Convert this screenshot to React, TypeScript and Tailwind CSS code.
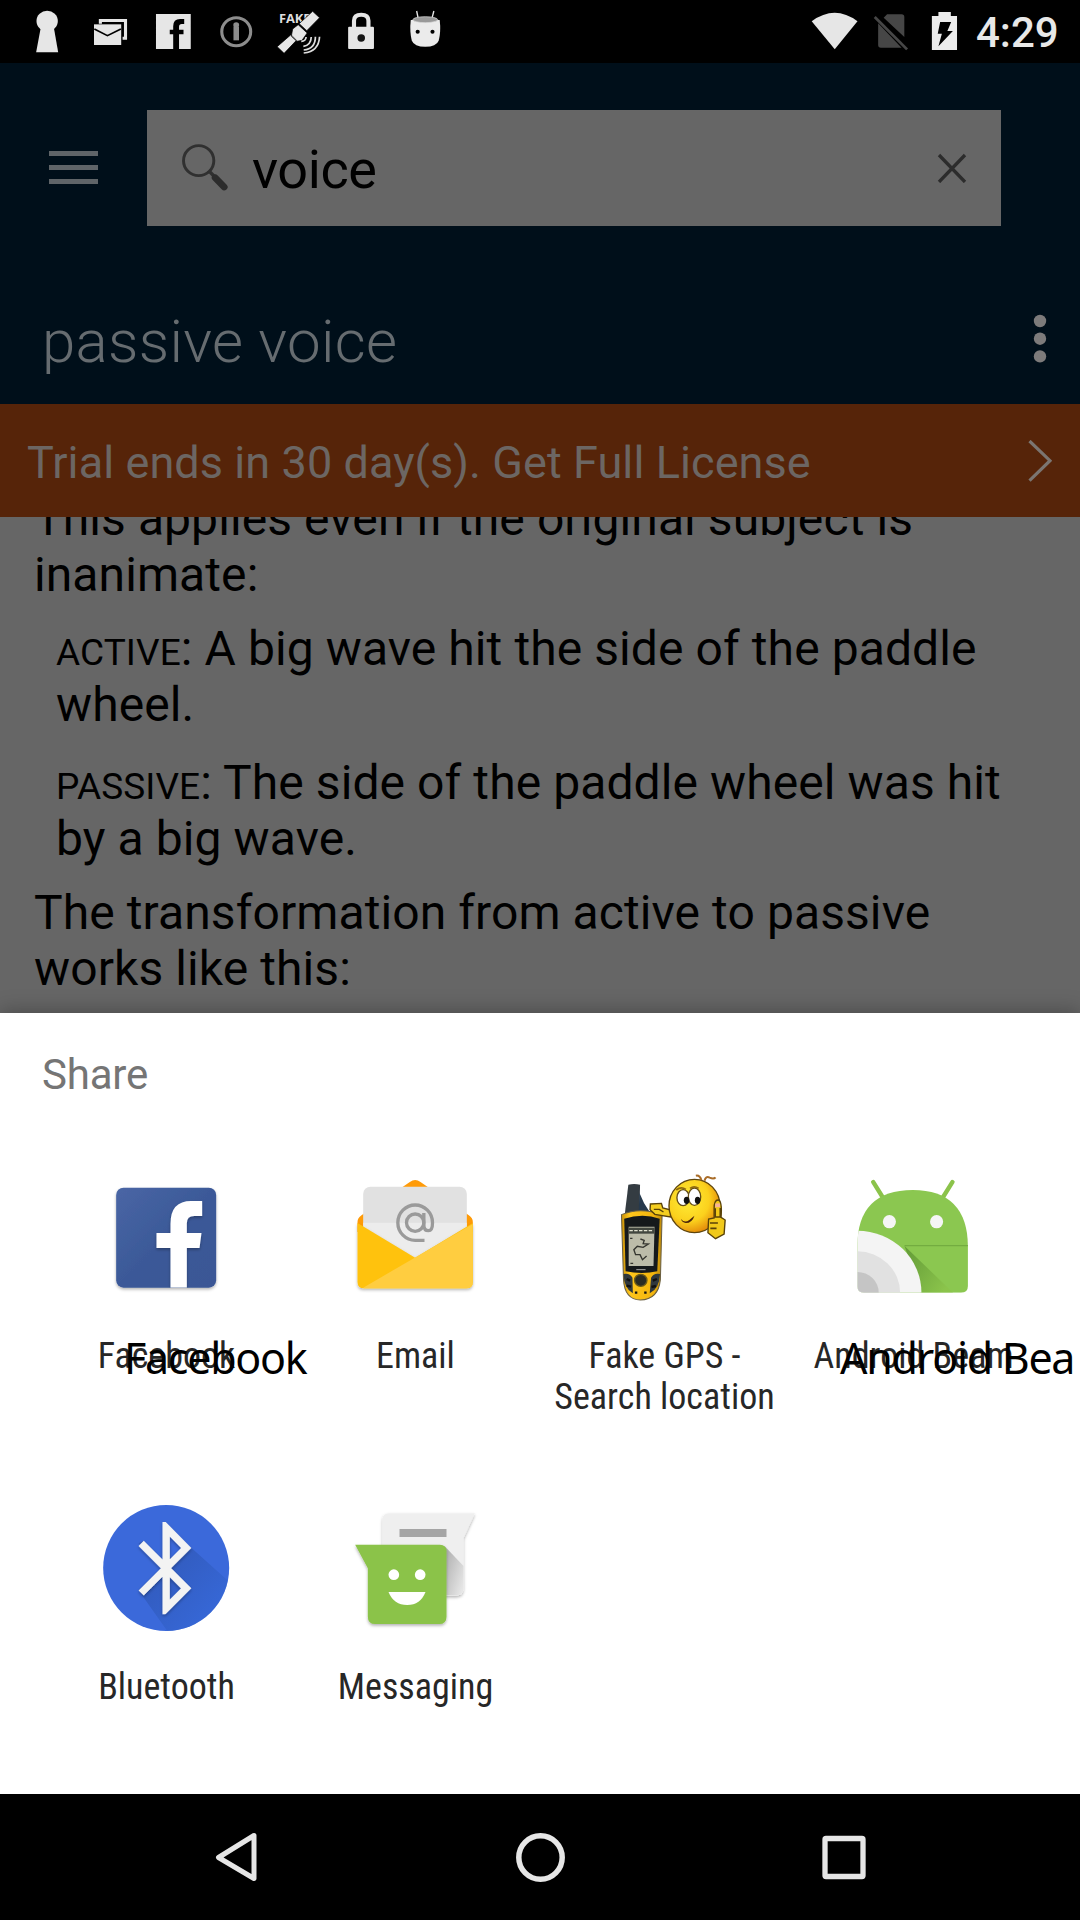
import type { ReactNode } from "react";

function Slot({ box, w, children }: { box: string; w: string; children: ReactNode }) {
  return (
    <svg className={`${w} h-[63px] shrink-0`} viewBox={box} preserveAspectRatio="none">
      {children}
    </svg>
  );
}

function StatusBar() {
  return (
    <header className="flex h-[63px] shrink-0 items-center bg-black pl-4">
      <Slot w="w-[63px]" box="46.5 0 183 189">
        <circle cx="137" cy="63" r="31" fill="#e6e6e6" />
        <path d="M119 80h37l13 77h-64z" fill="#e6e6e6" />
      </Slot>
      <Slot w="w-[63px]" box="229.4 0 183 189">
        <path d="M287 71V57h82v62h-13v-9h4V66h-64v5z" fill="#e6e6e6" />
        <path d="M273 73h79v62h-79z" fill="#e6e6e6" />
        <path d="M274 87l38 20 39-20" fill="none" stroke="#000" strokeWidth="5" />
      </Slot>
      <Slot w="w-[63px]" box="412.4 0 183 189">
        <path d="M453 42h101v105h-34v-44h13v-14h-13V80q0-8 8-8h7V57h-12q-20 0-20 22v10h-10v14h10v44h-50z" fill="#e6e6e6" />
      </Slot>
      <Slot w="w-[63px]" box="595.3 0 183 189">
        <circle cx="686" cy="95" r="42" fill="none" stroke="#8d8d8d" strokeWidth="9" />
        <path d="M678 80h16v41h-16z" fill="#8d8d8d" />
        <circle cx="686" cy="75" r="8.500" fill="#8d8d8d" />
      </Slot>
      <Slot w="w-[63px]" box="778.3 0 183 189">
        <text x="810" y="68" fontSize="38" fontWeight="700" fontFamily="Open Sans, sans-serif" textLength="92" lengthAdjust="spacingAndGlyphs" fill="#dedede">FAKE</text>
        <path d="M908 34l20 19-37 39-22-21zM866 74l26 25-15 22-15 3-16-15 4-22zM845 104l16 17-36 39-20-20z" fill="#e6e6e6" stroke="#000" strokeWidth="2" />
        <path d="M889 111q-1 13-14 13M904 111q-1 25-23 28M916 110q0 36-34 40M928 110q-2 44-46 49" fill="none" stroke="#dedede" strokeWidth="5" />
      </Slot>
      <Slot w="w-[63px]" box="961.2 0 183 189">
        <path d="M1028 82V62q0-18 21-18t21 18v20" fill="none" stroke="#e6e6e6" strokeWidth="12" />
        <rect x="1011" y="80" width="75" height="67" rx="3" fill="#e6e6e6" />
        <circle cx="1049" cy="114" r="11" fill="#151515" />
      </Slot>
      <Slot w="w-[63px]" box="1144.2 0 183 189">
        <path d="M1210 33l4 20M1260 33l-5 20" stroke="#e6e6e6" strokeWidth="4" />
        <path d="M1193 60q-4 35 3 62 7 18 39 18t39-18q7-27 3-62z" fill="#ebebeb" />
        <ellipse cx="1235" cy="59" rx="36" ry="9" fill="#999" stroke="#ddd" strokeWidth="2" />
        <circle cx="1213" cy="95" r="6" fill="#000" />
        <circle cx="1256" cy="95" r="6" fill="#000" />
      </Slot>
      <div className="ml-auto flex items-center">
        <Slot w="w-[58px]" box="769.6 0 168.4 189">
          <path d="M789 64q67-51 133 0l-66 84z" fill="#e6e6e6" />
        </Slot>
        <Slot w="w-[55px]" box="938 0 159.7 189">
          <path d="M998 53l10-10h42q8 0 8 8v60zM982 70l68 73h-60q-8 0-8-8z" fill="#464646" />
          <path d="M972 51l94 97" stroke="#464646" strokeWidth="8" />
        </Slot>
        <Slot w="w-[58px]" box="1097.7 0 168.4 189">
          <path d="M1157 36h36v12h18v102h-73V48h19z" fill="#ececec" />
          <path d="M1162 66h32l-11 27h16l-42 46 10-38h-12z" fill="#000" />
        </Slot>
        <span className="w-[104px] pt-[2px] text-[42px] leading-[63px] font-medium text-[#e8e8e8]">4:29</span>
      </div>
    </header>
  );
}

function SearchHeader() {
  return (
    <div className="h-[341px] shrink-0 bg-[#000f1a] pt-[47px]">
      <div className="flex h-[116px] items-center">
        <div className="ml-[49px] flex w-[98px] flex-col gap-[9px] pb-[1px]">
          <div className="h-[5px] w-[49px] bg-[#5f6468]" />
          <div className="h-[5px] w-[49px] bg-[#5f6468]" />
          <div className="h-[5px] w-[49px] bg-[#5f6468]" />
        </div>
        <div className="flex h-full w-[854px] items-center bg-[#666]">
          <svg className="h-[116px] w-[105px] shrink-0" viewBox="426.9 330 305 348" preserveAspectRatio="none">
            <ellipse cx="577" cy="482" rx="44" ry="45" fill="none" stroke="#303030" strokeWidth="8.500" />
            <path d="M606 512l18 19" stroke="#303030" strokeWidth="10" />
            <path d="M625 533l26 28" stroke="#2c2c2c" strokeWidth="20" strokeLinecap="round" />
          </svg>
          <span className="pt-[3px] text-[54px] leading-[63px] tracking-[-0.4px] text-black">voice</span>
          <svg className="mr-[34px] ml-auto h-[30px] w-[30px]" viewBox="0 0 30 30">
            <path d="M2 2l26 27M28 2L2 29" stroke="#2c2c2c" strokeWidth="3.300" />
          </svg>
        </div>
      </div>
      <div className="flex h-[178px] items-center pt-[2px] pl-[42px]">
        <h1 className="pt-[51px] text-[60px] leading-[70px] font-light tracking-[0.3px] text-[#666c70]">passive voice</h1>
        <svg className="mr-[33px] ml-auto mt-[46px] h-[50px] w-[14px]" viewBox="0 0 14 50">
          <circle cx="7" cy="7" r="6.2" fill="#7d7b7b" />
          <circle cx="7" cy="24.7" r="6.2" fill="#7d7b7b" />
          <circle cx="7" cy="42.4" r="6.2" fill="#7d7b7b" />
        </svg>
      </div>
    </div>
  );
}

function TrialBanner() {
  return (
    <div className="flex h-[113px] shrink-0 items-center bg-[#562409] pr-7 pl-[27px] text-[#6c6663]">
      <span className="pt-[4px] text-[45px] leading-[53px] tracking-[0.08px] whitespace-nowrap">Trial ends in 30 day(s). Get Full License</span>
      <svg className="ml-auto h-[42px] w-6" viewBox="0 0 24 42">
        <path d="M1.5 1l20.500 19.700L1.500 40.700" fill="none" stroke="#7b7571" strokeWidth="3.200" />
      </svg>
    </div>
  );
}

function Article() {
  return (
    <main className="h-[496px] shrink-0 overflow-hidden bg-[#666] text-[48px] leading-[56.25px] tracking-[0.09px] whitespace-nowrap text-black">
      <p className="-mt-[26px] pl-[34px]">This applies even if the original subject is<br />inanimate:</p>
      <p className="mt-[17px] pl-14"><span className="text-[37px] leading-none">ACTIVE</span>: A big wave hit the side of the paddle<br />wheel.</p>
      <p className="mt-[22px] pl-14"><span className="text-[37px] leading-none">PASSIVE</span>: The side of the paddle wheel was hit<br />by a big wave.</p>
      <p className="mt-[17px] pl-[34px]">The transformation from active to passive<br />works like this:</p>
    </main>
  );
}

const FacebookIcon = (
  <svg className="size-36" viewBox="103.5 75 432 432">
    <defs>
      <linearGradient id="fb" x1="0" y1="0" x2="1" y2="1"><stop offset="0" stopColor="#4a66a5" /><stop offset=".5" stopColor="#3b5998" /><stop offset="1" stopColor="#3a5795" /></linearGradient>
      <filter id="sh" x="-20%" y="-20%" width="140%" height="150%"><feDropShadow dx="0" dy="5" stdDeviation="4" floodOpacity=".3" /></filter>
      <clipPath id="fbc"><rect x="170" y="143" width="300" height="300" rx="22" /></clipPath>
    </defs>
    <rect x="170" y="143" width="300" height="300" rx="22" fill="url(#fb)" filter="url(#sh)" />
    <path clipPath="url(#fbc)" filter="url(#sh)" d="M333 443V324h-42v-45h42v-28q0-68 62-68h33v45h-24q-22 0-22 22v29h44l-6 45h-38v119z" fill="#fff" />
  </svg>
);

const EmailIcon = (
  <svg className="size-36" viewBox="850.5 75 432 432">
    <path d="M894 246q0-12 12-20l145-100q16-12 32 0l145 100q12 8 12 20v30H894z" fill="#ff9b08" />
    <rect x="911" y="140" width="311" height="250" rx="22" fill="#e1e1e1" />
    <path d="M911 248h311v60l-155 70-156-70z" fill="#ececec" />
    <path d="M894 249l173 104 173-104v176q0 20-20 20H914q-20 0-20-20z" fill="#ffc20e" filter="url(#sh)" />
    <path d="M911 443L1240 252v173q0 20-20 20H914z" fill="#ffcd40" />
    <circle cx="1067" cy="248" r="26" fill="none" stroke="#9a9a9a" strokeWidth="10" />
    <path d="M1093 219v35q0 18 14 18 12 0 12-24a52 53 0 1 0-52 53h28" fill="none" stroke="#9a9a9a" strokeWidth="10" />
  </svg>
);

const GpsIcon = (
  <svg className="size-36" viewBox="152.500 75 418 432" preserveAspectRatio="none">
    <defs>
      <radialGradient id="face" cx=".38" cy=".38" r=".68"><stop offset="0" stopColor="#ffed38" /><stop offset=".6" stopColor="#fbd11d" /><stop offset="1" stopColor="#e18208" /></radialGradient>
      <linearGradient id="gps"><stop offset="0" stopColor="#c89008" /><stop offset=".2" stopColor="#ffc61c" /><stop offset=".8" stopColor="#f2b40c" /><stop offset="1" stopColor="#ba8709" /></linearGradient>
    </defs>
    <path d="M258 134q17-4 34 0l-2 86h-42z" fill="#343c42" />
    <path d="M290 158q12 32 28 55l-30 10z" fill="#26394d" />
    <path d="M238 224q54-24 118 0l-5 195q-6 60-58 61-46-2-49-61z" fill="url(#gps)" stroke="#6b6042" strokeWidth="3" />
    <path d="M246 236q54-18 103 0l-7 158q-44 10-92 0z" fill="#15191b" />
    <path d="M259 260h75l-3 118h-72z" fill="#bcbca9" />
    <path d="M259 263h75v18h-75z" fill="#42473f" />
    <path d="M261 272h67" stroke="#e2e2d0" strokeWidth="4" strokeDasharray="10 4" />
    <path d="M293 297l11 4-3 10 15 1-15 10-17-3-10 10 5 15 13 0 7 15 12-11M263 295h7M264 370h8" fill="none" stroke="#34352f" strokeWidth="4" />
    <path d="M244 402q18-4 26 11l1 47q-25-13-27-58zM350 402q-18-4-26 11l-4 47q28-13 30-58z" fill="#30383d" />
    <circle cx="294" cy="421" r="18" fill="#292b24" stroke="#6b5a18" strokeWidth="4" />
    <path d="M253 417l10 5M253 437l13 3M341 417l-12 5M338 438l-13 3M277 458h7M304 458h7" stroke="#111" strokeWidth="7" />
    <path d="M281 389h27" stroke="#aaa" strokeWidth="3" />
    <path d="M322 192l32-2 4 14 24 6-2 21-45-8-14-14z" fill="#f4ce20" stroke="#594209" strokeWidth="4" />
    <path d="M332 208h16l12 8" fill="none" stroke="#594209" strokeWidth="4" />
    <ellipse cx="450" cy="198" rx="74" ry="80" fill="url(#face)" stroke="#5e450d" strokeWidth="4" />
    <path d="M470 121q-4-16-16-14M479 122q4-15 15-9 12 6 17-1" fill="none" stroke="#a96c28" strokeWidth="6" />
    <ellipse cx="417" cy="173" rx="18" ry="24" fill="#fff" stroke="#675019" strokeWidth="4" />
    <ellipse cx="450" cy="170" rx="18" ry="26" fill="#fff" stroke="#675019" strokeWidth="4" />
    <ellipse cx="427" cy="181" rx="8" ry="11" fill="#111" />
    <ellipse cx="459" cy="181" rx="8" ry="11" fill="#111" />
    <path d="M397 150q14-12 28-2M437 145q12-9 25 0" fill="none" stroke="#8f6a10" strokeWidth="5" />
    <path d="M411 237q10 14 24 3l15-13q-7 22-25 22-12-1-14-12z" fill="#4a230b" />
    <path d="M507 205q0-26 12-25 12 3 8 52l12 8-3 42-25 14-22-18 2-41 16-3z" fill="#f1c91a" stroke="#594209" strokeWidth="4" />
    <path d="M495 249h23M496 265h18M510 205v26h15v-27" fill="none" stroke="#594209" strokeWidth="5" />
    <path d="M510 196h14" stroke="#f7b29a" strokeWidth="11" />
  </svg>
);

const BeamIcon = (
  <svg className="size-36" viewBox="875.500 75 418 432" preserveAspectRatio="none">
    <defs>
      <clipPath id="bm"><path d="M923 318q0-167 161-168 158 1 160 168v120q0 20-20 20H943q-20 0-20-20z" /></clipPath>
      <linearGradient id="bs" x1="0" y1="0" x2="1" y2=".7"><stop offset="0" stopColor="#558b2f" /><stop offset="1" stopColor="#8bc34a" /></linearGradient>
    </defs>
    <path d="M969 126l30 50M1199 126l-30 50" stroke="#8bc34a" strokeWidth="13" strokeLinecap="round" />
    <g clipPath="url(#bm)">
      <path d="M920 145h330v320H920z" fill="#8bc750" />
      <path d="M1060 317h190" stroke="#73ac40" strokeWidth="4" />
      <path d="M1060 318l141 140h-95z" fill="url(#bs)" opacity=".75" />
      <circle cx="923" cy="458" r="186" fill="#f4f4f4" />
      <circle cx="923" cy="458" r="124" fill="#e1e1e1" />
      <circle cx="923" cy="458" r="62" fill="#c5c5c5" />
      <ellipse cx="1016" cy="245" rx="19" ry="20" fill="#f5f5f5" />
      <ellipse cx="1153" cy="245" rx="19" ry="20" fill="#f5f5f5" />
    </g>
  </svg>
);

const BluetoothIcon = (
  <svg className="size-36" viewBox="103.5 48 432 432">
    <defs>
      <clipPath id="btc"><circle cx="320" cy="264" r="189" /></clipPath>
      <clipPath id="btr"><path d="M200 126h240v277H200z" /></clipPath>
      <linearGradient id="bts" x1="0" y1="0" x2="1" y2="1"><stop offset=".2" stopColor="#2a4fa5" /><stop offset=".75" stopColor="#3367d6" /></linearGradient>
    </defs>
    <circle cx="320" cy="264" r="189" fill="#3b69da" />
    <path clipPath="url(#btc)" d="M396 204l140 125-120 170h-60l-119-168 70-69-70-72 15-8 60 60z" fill="url(#bts)" opacity=".55" />
    <g filter="url(#sh)">
      <path clipPath="url(#btr)" d="M245 190l135 135-60 60V143l60 61-135 135" fill="none" stroke="#f3f3f3" strokeWidth="22" />
    </g>
  </svg>
);

const MessagingIcon = (
  <svg className="size-36" viewBox="850.5 48 432 432">
    <defs><linearGradient id="ms" x1="0" y1="0" x2="1" y2=".8"><stop offset="0" stopColor="#aaa" /><stop offset="1" stopColor="#e6e6e6" /></linearGradient></defs>
    <path d="M969 120q0-20 20-20h257l-34 75v150q0 22-22 22H969z" fill="#efefef" filter="url(#sh)" />
    <path d="M1155 198l57 60v66q0 22-22 22h-30z" fill="url(#ms)" />
    <path d="M1020 147h141v24h-141z" fill="#a5a5a5" />
    <path d="M887 194h254q20 0 20 20v196q0 22-22 22H947q-22 0-22-22V265z" fill="#8bc34a" filter="url(#sh)" />
    <circle cx="1003" cy="284" r="16" fill="#fff" />
    <circle cx="1082" cy="284" r="16" fill="#fff" />
    <path d="M987 336h111q-15 39-55 39t-56-39z" fill="#fff" />
  </svg>
);

function ShareTarget({ icon, lines, overlay, overlayLeft = "" }: { icon: ReactNode; lines: string[]; overlay?: string; overlayLeft?: string }) {
  return (
    <div className="relative flex h-[331px] w-[249px] flex-col items-center">
      <div className="mr-px">{icon}</div>
      <div className="mt-[27px] flex flex-col items-center font-['Roboto_Condensed','Roboto'] text-[36px] leading-[41px] whitespace-nowrap text-[#272727]">
        {lines.map((line) => <span key={line}>{line}</span>)}
      </div>
      {overlay && (
        <span className={`absolute top-[163px] ${overlayLeft} font-['Noto_Sans'] text-[43px] leading-[60px] tracking-[-1.3px] whitespace-nowrap text-black`}>{overlay}</span>
      )}
    </div>
  );
}

function ShareSheet() {
  return (
    <section className="h-[781px] shrink-0 overflow-hidden bg-white shadow-[0_-3px_18px_rgba(0,0,0,0.25)]">
      <h2 className="h-[152px] pt-[37px] pl-[42px] text-[42px] leading-[50px] tracking-[-0.2px] text-[#757575]">Share</h2>
      <div className="flex flex-wrap px-[42px]">
        <ShareTarget icon={FacebookIcon} lines={["Facebook"]} overlay="Facebook" overlayLeft="left-[82px]" />
        <ShareTarget icon={EmailIcon} lines={["Email"]} />
        <ShareTarget icon={GpsIcon} lines={["Fake GPS -", "Search location"]} />
        <ShareTarget icon={BeamIcon} lines={["Android Beam"]} overlay="Android Bea" overlayLeft="left-[51px]" />
        <ShareTarget icon={BluetoothIcon} lines={["Bluetooth"]} />
        <ShareTarget icon={MessagingIcon} lines={["Messaging"]} />
      </div>
    </section>
  );
}

function NavBar() {
  return (
    <nav className="flex h-[126px] shrink-0 items-center justify-center gap-[239.5px] bg-black">
      <svg className="size-16" viewBox="0 0 64 64">
        <path d="M49 10.500L13.500 32.500 49 53.500z" fill="none" stroke="#e6e6e6" strokeWidth="5" strokeLinejoin="round" />
      </svg>
      <svg className="size-16" viewBox="0 0 64 64"><circle cx="32.500" cy="32.500" r="21.700" fill="none" stroke="#e6e6e6" strokeWidth="5.500" /></svg>
      <svg className="size-16" viewBox="0 0 64 64"><rect x="13" y="13.500" width="38" height="38" rx="1" fill="none" stroke="#e6e6e6" strokeWidth="5.300" strokeLinejoin="round" /></svg>
    </nav>
  );
}

export default function App() {
  return (
    <div className="flex h-[1920px] w-[1080px] flex-col overflow-hidden bg-black font-['Roboto',sans-serif]">
      <StatusBar />
      <SearchHeader />
      <TrialBanner />
      <Article />
      <ShareSheet />
      <NavBar />
    </div>
  );
}
